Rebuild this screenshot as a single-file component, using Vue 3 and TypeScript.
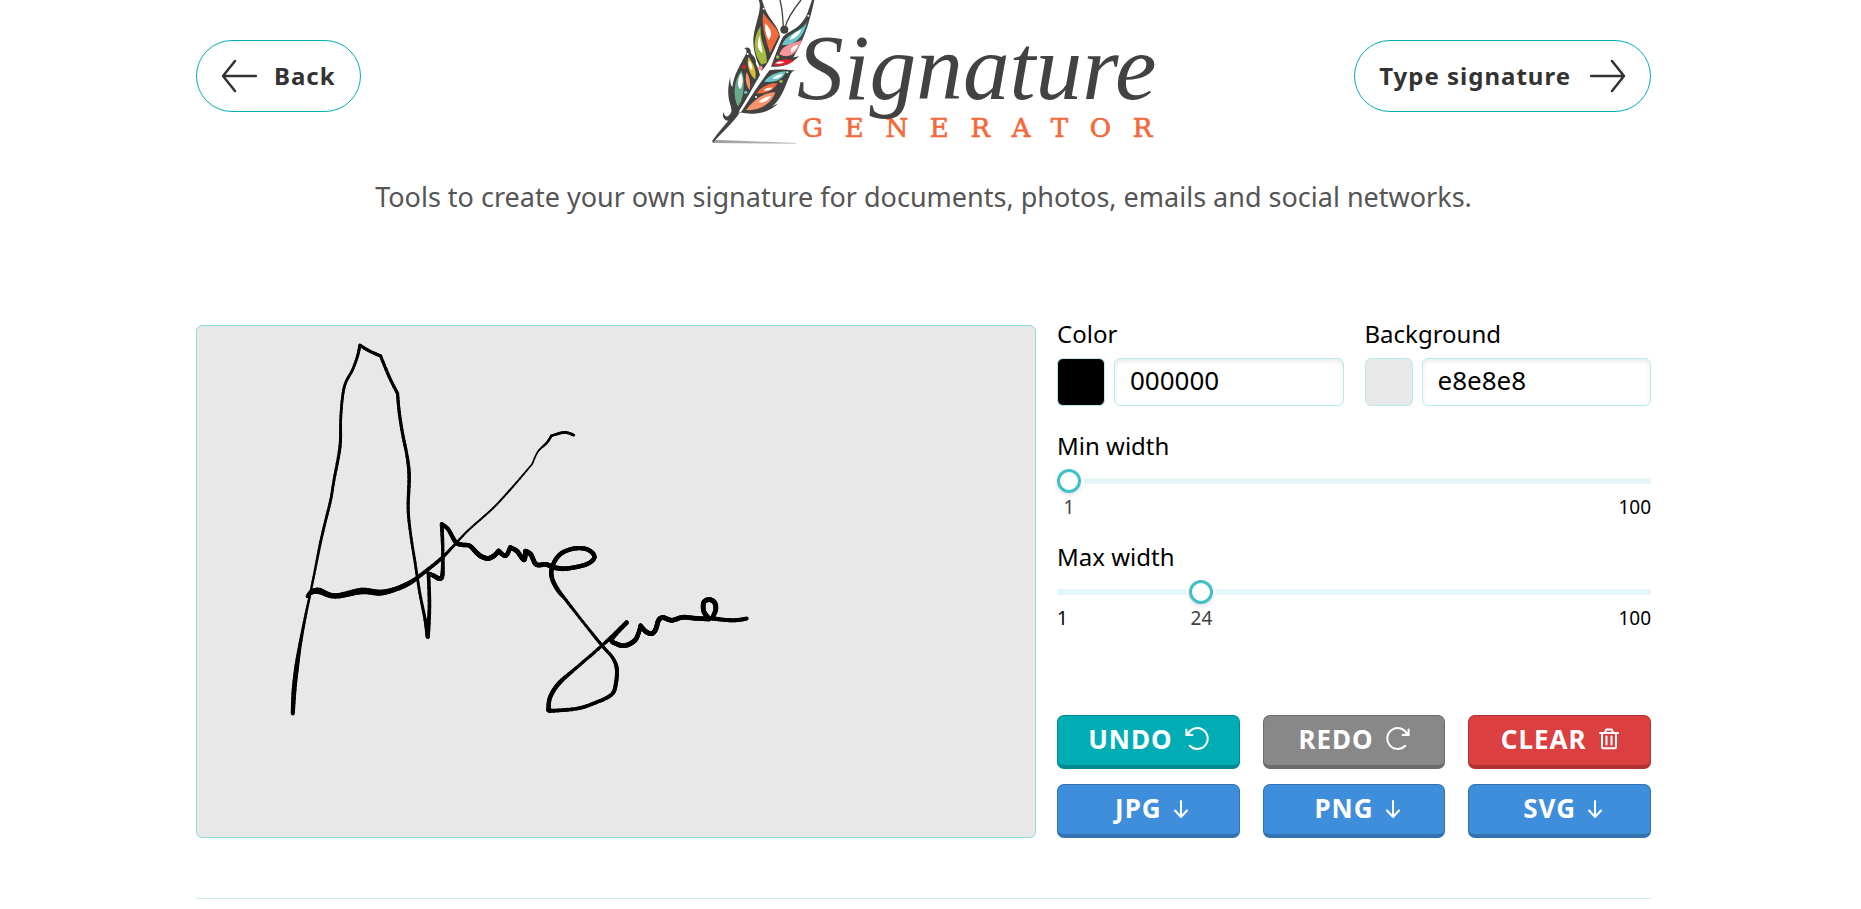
<script setup lang="ts">
import { computed, ref } from 'vue'

type Point = [x: number, y: number, width: number]
interface Segment { x1: number; y1: number; x2: number; y2: number; w: number }

const color = ref('000000')
const background = ref('e8e8e8')
const sliders = ref([
  { id: 'min-width', label: 'Min width', value: 1 },
  { id: 'max-width', label: 'Max width', value: 24 },
])
const actions = [
  { label: 'UNDO', icon: 'undo', tone: 'teal' },
  { label: 'REDO', icon: 'redo', tone: 'gray' },
  { label: 'CLEAR', icon: 'trash', tone: 'red' },
  { label: 'JPG', icon: 'down', tone: 'blue' },
  { label: 'PNG', icon: 'down', tone: 'blue' },
  { label: 'SVG', icon: 'down', tone: 'blue' },
]

/* Pen strokes; a new array begins wherever the pen turns sharply. */
const strokes: Point[][] = [
  [[38, 1152, 10], [42, 1080, 12], [50, 1010, 12], [60, 945, 9], [75, 865, 7], [91, 790, 6], [105, 720, 6], [122, 635, 7], [136, 575, 7], [152, 510, 7], [162, 450, 7], [180, 350, 8], [182, 270, 7], [187, 205, 7], [196, 160, 7], [217, 120, 7], [232, 80, 7], [240, 45, 8]],
  [[240, 45, 8], [268, 62, 8], [302, 77, 8]],
  [[302, 77, 8], [328, 140, 8], [353, 190, 8]],
  [[353, 190, 8], [358, 245, 8], [368, 310, 8], [382, 380, 8], [388, 440, 9], [385, 535, 8], [392, 610, 7], [406, 700, 7], [420, 790, 7], [436, 870, 8], [444, 921, 11]],
  [[444, 921, 11], [449, 830, 9], [446, 731, 9]],
  [[446, 731, 9], [462, 738, 11], [478, 746, 12], [488, 735, 11], [489, 660, 8], [486, 583, 10]],
  [[486, 583, 10], [505, 598, 10], [528, 637, 11], [548, 645, 11], [570, 648, 11], [590, 668, 12], [605, 680, 12], [625, 686, 12], [643, 678, 12], [657, 664, 12]],
  [[657, 664, 12], [678, 678, 11], [692, 653, 11]],
  [[692, 653, 11], [712, 664, 12], [733, 690, 12], [738, 664, 12]],
  [[738, 664, 12], [754, 674, 12], [770, 704, 12], [800, 704, 12], [820, 712, 12], [850, 717, 12], [890, 712, 11], [925, 702, 11], [944, 686, 11], [940, 670, 11], [918, 657, 11], [885, 656, 11], [850, 668, 11], [828, 690, 11], [816, 722, 11], [819, 750, 11], [836, 782, 11], [860, 812, 8], [910, 876, 7], [968, 948, 8], [998, 982, 8], [1012, 1015, 10], [1010, 1060, 10], [996, 1096, 10], [940, 1123, 9], [890, 1138, 9], [816, 1144, 10], [807, 1140, 11]],
  [[807, 1140, 11], [812, 1103, 11], [840, 1060, 11], [900, 1007, 8], [968, 948, 8], [1042, 879, 11]],
  [[1042, 879, 11], [998, 928, 11], [1012, 943, 12], [1038, 948, 12], [1066, 933, 12], [1078, 910, 11], [1084, 888, 11]],
  [[1084, 888, 11], [1100, 906, 12], [1118, 912, 12], [1130, 898, 12], [1138, 872, 12], [1152, 864, 12], [1178, 872, 12], [1210, 863, 12], [1250, 866, 12], [1290, 868, 12]],
  [[1290, 868, 12], [1274, 845, 12], [1274, 818, 12], [1290, 810, 12], [1306, 818, 12], [1310, 840, 12], [1299, 866, 11]],
  [[1299, 866, 11], [1340, 871, 10], [1370, 872, 10], [1403, 867, 10]],
  [[82, 800, 8], [95, 787, 12], [118, 784, 16], [165, 799, 13], [245, 784, 16], [300, 789, 15], [345, 779, 12], [385, 762, 12], [415, 742, 10], [480, 690, 9], [520, 650, 7], [565, 602, 5], [640, 535, 5], [700, 470, 5], [758, 402, 4]],
  [[758, 402, 4], [775, 365, 4], [802, 338, 6], [816, 317, 6]],
  [[816, 317, 6], [855, 307, 7], [883, 315, 7]],
]

const STEPS = 6
const PEN_SCALE = 1.2

function spline(a: number, b: number, c: number, d: number, t: number): number {
  return 0.5 * (2 * b + (c - a) * t + (2 * a - 5 * b + 4 * c - d) * t * t + (3 * b - a - 3 * c + d) * t * t * t)
}

/* Splits a stroke into short pieces so its width can vary along the curve. */
function segmentsOf(points: Point[]): Segment[] {
  const out: Segment[] = []
  for (let i = 0; i < points.length - 1; i++) {
    const b = points[i]
    const c = points[i + 1]
    const a = points[i - 1] ?? b
    const d = points[i + 2] ?? c
    let x = b[0]
    let y = b[1]
    for (let s = 1; s <= STEPS; s++) {
      const t = s / STEPS
      const nx = spline(a[0], b[0], c[0], d[0], t)
      const ny = spline(a[1], b[1], c[1], d[1], t)
      out.push({ x1: x, y1: y, x2: nx, y2: ny, w: PEN_SCALE * (b[2] + (c[2] - b[2]) * t) })
      x = nx
      y = ny
    }
  }
  return out
}

const ink = strokes.flatMap(segmentsOf)
const inkColor = computed(() => `#${color.value}`)
const paperColor = computed(() => `#${background.value}`)

const thumbPosition = (value: number): string => {
  const ratio = (value - 1) / 99
  return `calc(12px + (100% - 24px) * ${ratio})`
}
</script>

<template>
  <div class="page">
    <div class="container">
      <header class="header">
        <a class="pill" href="#back">
          <svg class="pill-icon" viewBox="0 0 36 34" aria-hidden="true"><path d="M14 2 2 17l12 15M2 17h33" /></svg>
          <span>Back</span>
        </a>

        <svg class="logo" viewBox="-36 0 1416 480" role="img" aria-label="Signature Generator">
          <defs>
            <linearGradient id="ground" x1="0" x2="1" y1="0" y2="0">
              <stop offset="0" stop-color="#a0a0a0" />
              <stop offset="1" stop-color="#bcbcbc" />
            </linearGradient>
          </defs>
          <path fill="url(#ground)" d="M44 419 288 429v2L36 429Z" />
          <g fill="#424240">
            <path d="M176 0C190 30 158 80 160 130 162 165 175 195 186 212L206 186 240 112C238 80 208 60 194 24L186 0Z" />
            <path d="M132 145C150 136 153 152 153 160 160 170 168 170 168 192 174 205 178 215 180 225L117 336 88 362C72 364 66 350 70 336 74 352 84 354 92 340 98 330 92 320 87 300 82 270 86 250 91 230 90 245 92 255 97 262 100 225 124 190 139 160 141 150 138 147 132 145Z" />
            <path d="M343 0C332 50 318 110 280 172L298 169C275 188 255 204 213 200L244 116C262 92 302 90 322 40L336 0Z" />
            <path d="M208 211C235 206 262 211 286 211 270 215 271 228 262 244 250 275 240 300 216 320L232 312C205 340 160 347 118 337Z" />
            <path d="M98 345 120 336C98 372 62 400 40 427L36 424C55 395 80 370 98 345Z" />
            <circle cx="253" cy="89" r="12" />
          </g>
          <g fill="none" stroke="#424240" stroke-width="4">
            <path d="M240 0C248 30 248 55 250 80M303 0C275 35 262 55 256 80" />
            <path stroke-width="2" d="M194 330Q220 322 231 312" />
          </g>
          <path fill="#f26a3c" d="M190 38C182 80 200 120 210 160L237 105C232 80 205 65 190 38Z" />
          <path fill="#a3bc3f" d="M182 78C155 120 160 160 184 194L200 188C203 150 178 125 182 78Z" />
          <path fill="#68a98b" d="M125 212C100 240 98 290 114 320 128 300 134 270 130 230Z" />
          <path fill="#f7926b" d="M140 217C134 235 138 258 149 270 153 250 148 230 140 217Z" />
          <path fill="#d8be36" d="M145 170C138 195 150 225 165 238 172 215 160 190 145 170Z" />
          <path fill="#6cc5c8" d="M322 62C310 95 262 95 246 135 280 138 312 115 322 62Z" />
          <path fill="#f5949b" d="M305 120C280 132 250 130 238 163 270 180 296 155 305 120Z" />
          <path fill="#e1202f" d="M282 182C260 174 235 176 217 194 240 201 262 196 282 182Z" />
          <path fill="#6cc5c8" d="M258 214C235 215 205 225 193 245 225 250 248 240 258 214Z" />
          <path fill="#f26a3c" d="M232 250C205 248 182 262 170 280 200 282 222 270 232 250Z" />
          <path fill="#f7926b" d="M226 277C195 275 160 300 138 330 180 334 215 310 226 277Z" />
          <g fill="#fff">
            <path d="M196 70C193 95 200 107 206 120 218 104 216 92 196 70Z" />
            <path d="M181 104C168 130 172 148 187 160 190 145 178 125 181 104Z" />
            <path d="M123 220C110 240 113 262 120 268 130 258 130 235 123 220Z" />
            <path d="M148 182C143 194 150 206 157 210 158 198 154 188 148 182Z" />
            <path d="M304 88C285 98 272 108 269 119 288 116 298 104 304 88Z" />
            <path d="M294 134C276 138 269 148 274 158 284 152 292 144 294 134Z" />
            <path d="M254 186C242 183 232 184 226 190 236 193 246 191 254 186Z" />
            <path d="M250 223C236 222 224 228 217 236 232 238 242 232 250 223Z" />
            <path d="M218 263C206 262 196 266 190 272 202 272 212 270 218 263Z" />
            <path d="M214 289C198 289 184 297 176 307 194 309 206 300 214 289Z" />
            <circle cx="191" cy="26" r="3" /><circle cx="143" cy="162" r="3" />
            <circle cx="325" cy="47" r="3" /><circle cx="262" cy="217" r="3" /><circle cx="168" cy="291" r="3" />
          </g>
          <circle cx="132" cy="201" r="6" fill="#e1202f" />
          <circle cx="181" cy="204" r="7" fill="#f5949b" />
          <circle cx="137" cy="277" r="5" fill="#6cc5c8" />
          <circle cx="233" cy="171" r="5" fill="#a3bc3f" />
          <circle cx="243" cy="244" r="5" fill="#a3bc3f" />
          <path fill="none" stroke="#fff" stroke-width="7" stroke-linecap="round" d="M247 106C215 180 170 260 122 332" />
          <text class="logo-caps" x="307" y="411">GENERATOR</text>
          <text class="logo-script" x="291" y="297">Signature</text>
        </svg>

        <a class="pill pill-end" href="#type">
          <span>Type signature</span>
          <svg class="pill-icon" viewBox="0 0 36 34" aria-hidden="true"><path d="M22 2 34 17 22 32M34 17H1" /></svg>
        </a>
      </header>

      <p class="tagline">Tools to create your own signature for documents, photos, emails and social networks.</p>

      <main class="editor">
        <svg class="pad" viewBox="0 0 2520 1536" role="img" aria-label="Signature drawing" :style="{ backgroundColor: paperColor }">
          <g transform="translate(250 13)" stroke-linecap="round" :stroke="inkColor">
            <line v-for="(s, i) in ink" :key="i" :x1="s.x1" :y1="s.y1" :x2="s.x2" :y2="s.y2" :stroke-width="s.w" />
          </g>
        </svg>

        <section class="panel">
          <div class="colors">
            <div class="field">
              <label for="color">Color</label>
              <div class="field-row">
                <span class="swatch" :style="{ backgroundColor: inkColor }"></span>
                <input id="color" v-model="color" class="text-input" type="text" />
              </div>
            </div>
            <div class="field">
              <label for="background">Background</label>
              <div class="field-row">
                <span class="swatch" :style="{ backgroundColor: paperColor }"></span>
                <input id="background" v-model="background" class="text-input" type="text" />
              </div>
            </div>
          </div>

          <div v-for="slider in sliders" :key="slider.id" class="slider">
            <label :for="slider.id">{{ slider.label }}</label>
            <input :id="slider.id" v-model.number="slider.value" type="range" min="1" max="100" />
            <div class="scale">
              <span v-if="slider.value > 4">1</span>
              <output class="current" :for="slider.id" :style="{ left: thumbPosition(slider.value) }">{{ slider.value }}</output>
              <span class="scale-max">100</span>
            </div>
          </div>

          <div class="actions">
            <button v-for="a in actions" :key="a.label" type="button" class="btn" :class="a.tone">
              <span>{{ a.label }}</span>
              <svg v-if="a.icon === 'undo'" class="icon-lg" viewBox="0 0 24 24" aria-hidden="true"><path d="M2.5 8A10.4 10.4 0 1 1 4.8 18.7" /><path d="M1.4 2.6V8h6" /><path d="m1.4 8 3-3" /></svg>
              <svg v-else-if="a.icon === 'redo'" class="icon-lg" viewBox="0 0 24 24" aria-hidden="true"><path d="M21.5 8A10.4 10.4 0 1 0 19.2 18.7" /><path d="M22.6 2.6V8h-6" /><path d="m22.6 8-3-3" /></svg>
              <svg v-else-if="a.icon === 'trash'" class="icon-trash" viewBox="0 0 20 24" aria-hidden="true"><path d="M1 6h18M3 6v14q0 1.200 1.200 1.200h11.600q1.200 0 1.200-1.200V6M6 5.500l1.200-3h5.600l1.200 3M7.500 9.500v8M12.500 9.500v8" /></svg>
              <svg v-else class="icon-down" viewBox="0 0 14 24" aria-hidden="true"><path d="M7 5v16M1 14.500l6 6.500 6-6.500" /></svg>
            </button>
          </div>
        </section>
      </main>
      <hr class="rule" />
    </div>
  </div>
</template>

<style>
body {
  margin: 0;
  background: #fff;
}
</style>

<style scoped>
.page {
  box-sizing: border-box;
  padding: 0 14px 0 0;
  font-family: "Noto Sans", "Open Sans", sans-serif;
  font-size: 24px;
  color: #000;
}
.container {
  max-width: 1455px;
  margin: 0 auto;
}
.header {
  display: grid;
  grid-template-columns: 1fr auto 1fr;
  align-items: start;
}
.pill {
  box-sizing: border-box;
  display: flex;
  align-items: center;
  justify-self: start;
  gap: 17px;
  height: 72px;
  margin-top: 40px;
  padding: 0 24px;
  border: 1px solid #00adb5;
  border-radius: 36px;
  color: #333;
  font-weight: 700;
  letter-spacing: 1px;
  text-decoration: none;
  white-space: nowrap;
}
.pill span {
  padding-bottom: 2px;
}
.pill-end {
  justify-self: end;
  gap: 19px;
}
.pill-icon {
  width: 36px;
  height: 34px;
  fill: none;
  stroke: #333;
  stroke-width: 2.5;
  stroke-linecap: round;
  stroke-linejoin: round;
}
.logo {
  display: block;
  width: 472px;
  height: 160px;
  overflow: visible;
}
.logo-script {
  font-family: "Liberation Serif", serif;
  font-style: italic;
  font-size: 280px;
  fill: #424240;
}
.logo-caps {
  font-family: "DejaVu Serif", serif;
  font-size: 78px;
  letter-spacing: 65px;
  fill: #f26a3c;
  stroke: #f26a3c;
  stroke-width: 2;
}
.tagline {
  margin: 17px 0 108px;
  color: #555;
  font-size: 27px;
  line-height: 40px;
  text-align: center;
}
.editor {
  display: grid;
  grid-template-columns: minmax(0, 840fr) minmax(0, 594fr);
  gap: 21px;
}
.pad {
  box-sizing: border-box;
  display: block;
  width: 100%;
  border: 1px solid #8fdadd;
  border-radius: 6px;
}
.panel {
  display: flex;
  flex-direction: column;
}
.colors {
  display: grid;
  grid-template-columns: repeat(2, minmax(0, 1fr));
  gap: 21px;
  margin-bottom: 23px;
}
label {
  display: block;
  line-height: 33px;
}
.field label {
  margin: -8px 0 8px;
}
.field-row {
  display: flex;
  gap: 9px;
}
.swatch {
  box-sizing: border-box;
  flex: none;
  width: 48px;
  height: 48px;
  border: 1px solid #b9e9eb;
  border-radius: 6px;
}
.text-input {
  box-sizing: border-box;
  flex: 1;
  min-width: 0;
  height: 48px;
  padding: 0 15px 4px;
  border: 1px solid #b9e9eb;
  border-radius: 6px;
  background: #fff;
  box-shadow: inset 0 3px 5px rgba(0, 0, 0, 0.08);
  color: #000;
  font: inherit;
  font-size: 26px;
}
.slider {
  margin-bottom: 21px;
}
.slider input {
  appearance: none;
  display: block;
  width: 100%;
  height: 24px;
  margin: 7px 0 2px;
  background: linear-gradient(#e4f6f6, #e4f6f6) center / 100% 6px no-repeat;
  border-radius: 3px;
}
.slider input::-webkit-slider-thumb {
  appearance: none;
  box-sizing: border-box;
  width: 24px;
  height: 24px;
  border: 3px solid #40c1c8;
  border-radius: 50%;
  background: #fff;
  box-shadow: 0 2px 4px rgba(0, 0, 0, 0.12), 0 0 0 3px #fff;
}
.scale {
  position: relative;
  display: flex;
  font-size: 19px;
  line-height: 24px;
}
.scale-max {
  margin-left: auto;
}
.current {
  position: absolute;
  top: 0;
  transform: translateX(-50%);
  color: #404040;
}
.actions {
  display: grid;
  grid-template-columns: repeat(3, minmax(0, 1fr));
  gap: 15px 23px;
  margin-top: auto;
}
.btn {
  box-sizing: border-box;
  display: flex;
  align-items: center;
  justify-content: center;
  gap: 12px;
  height: 54px;
  padding: 0 0 2px;
  border: 1px solid;
  border-bottom-width: 4px;
  border-radius: 7px;
  color: #fff;
  font: inherit;
  font-size: 26px;
  font-weight: 700;
  letter-spacing: 1px;
}
.btn svg {
  fill: none;
  stroke: #fff;
  stroke-width: 2;
  stroke-linecap: round;
  stroke-linejoin: round;
}
.teal { background: #00adb5; border-color: #008a91; }
.gray { background: #888; border-color: #6c6c6c; }
.red { background: #db3f40; border-color: #af3233; }
.blue { background: #3f8edb; border-color: #3272af; padding-left: 6px; }
.icon-lg { width: 24px; height: 24px; }
.icon-trash { width: 20px; height: 24px; }
.icon-down { width: 14px; height: 24px; }
.rule {
  margin: 60px 0 0;
  border: 0;
  border-top: 1px solid #cdeeee;
}
</style>
